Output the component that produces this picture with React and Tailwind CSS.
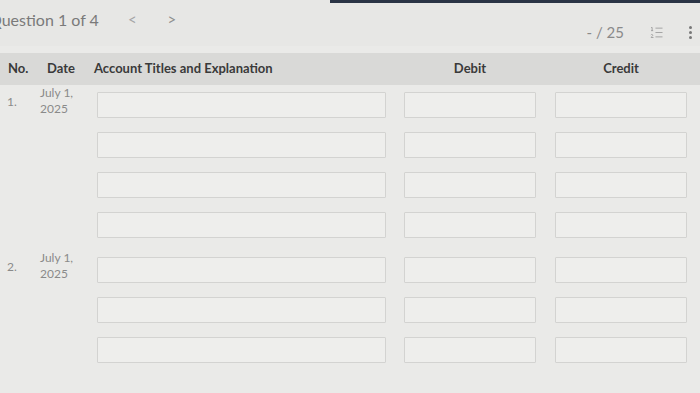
import { ListOrdered } from 'lucide-react';

const ENTRIES = [
  { no: '1.', date: ['July 1,', '2025'], rows: 4 },
  { no: '2.', date: ['July 1,', '2025'], rows: 3 },
];

function Field({ className }) {
  return <div className={`h-[26px] border border-[#d3d3d1] bg-[#eeeeec] rounded-[1px] ${className}`} />;
}

function Entry({ entry }) {
  return (
    <div className="flex">
      <div className="w-[40px] pl-[7px] pt-[1px] text-[12px] text-[#8a8a8a]">{entry.no}</div>
      <div className="w-[57px] text-[12px] leading-[16px] text-[#8a8a8a] -mt-[7px]">
        <div>{entry.date[0]}</div>
        <div>{entry.date[1]}</div>
      </div>
      <div className="flex flex-col gap-[14px]">
        {Array.from({ length: entry.rows }).map((_, i) => (
          <div key={i} className="flex">
            <Field className="w-[289px]" />
            <Field className="w-[132px] ml-[18px]" />
            <Field className="w-[132px] ml-[19px]" />
          </div>
        ))}
      </div>
    </div>
  );
}

export default function App() {
  return (
    <div className="w-[700px] h-[393px] overflow-hidden bg-[#eaeae8] font-['Lato','Noto_Sans',sans-serif]">
      <div className="relative h-[46px] bg-[#e7e7e5]">
        <div className="absolute top-0 left-[330px] right-0 h-[3px] bg-[#2a3445]" />
        <div className="flex items-start pt-[8px]">
          <span className="-ml-[11px] text-[16px] text-[#7a7a7a]">Question 1 of 4</span>
          <span className="ml-[29px] text-[15px] text-[#a5a5a5]">&lt;</span>
          <span className="ml-[31px] text-[15px] text-[#8f8f8f]">&gt;</span>
          <div className="ml-auto flex items-center gap-[25px] pr-[8px] pt-[13px]">
            <span className="text-[15px] text-[#8a8a8a]">- / 25</span>
            <ListOrdered size={15} strokeWidth={1.5} className="text-[#a0a0a0]" />
            <span className="flex flex-col gap-[2px]">
              <span className="w-[3px] h-[3px] rounded-full bg-[#777]" />
              <span className="w-[3px] h-[3px] rounded-full bg-[#777]" />
              <span className="w-[3px] h-[3px] rounded-full bg-[#777]" />
            </span>
          </div>
        </div>
      </div>
      <div className="mt-[7px] h-[32px] bg-[#d9d9d7] flex items-center text-[13px] font-bold text-[#3a3a3a]">
        <div className="w-[40px] pl-[8px]">No.</div>
        <div className="w-[54px] pl-[7px]">Date</div>
        <div className="w-[310px]">Account Titles and Explanation</div>
        <div className="w-[132px] text-center">Debit</div>
        <div className="w-[151px] pl-[19px] text-center">Credit</div>
      </div>
      <div className="pt-[7px] flex flex-col gap-[19px]">
        {ENTRIES.map((e) => (
          <Entry key={e.no} entry={e} />
        ))}
      </div>
    </div>
  );
}
